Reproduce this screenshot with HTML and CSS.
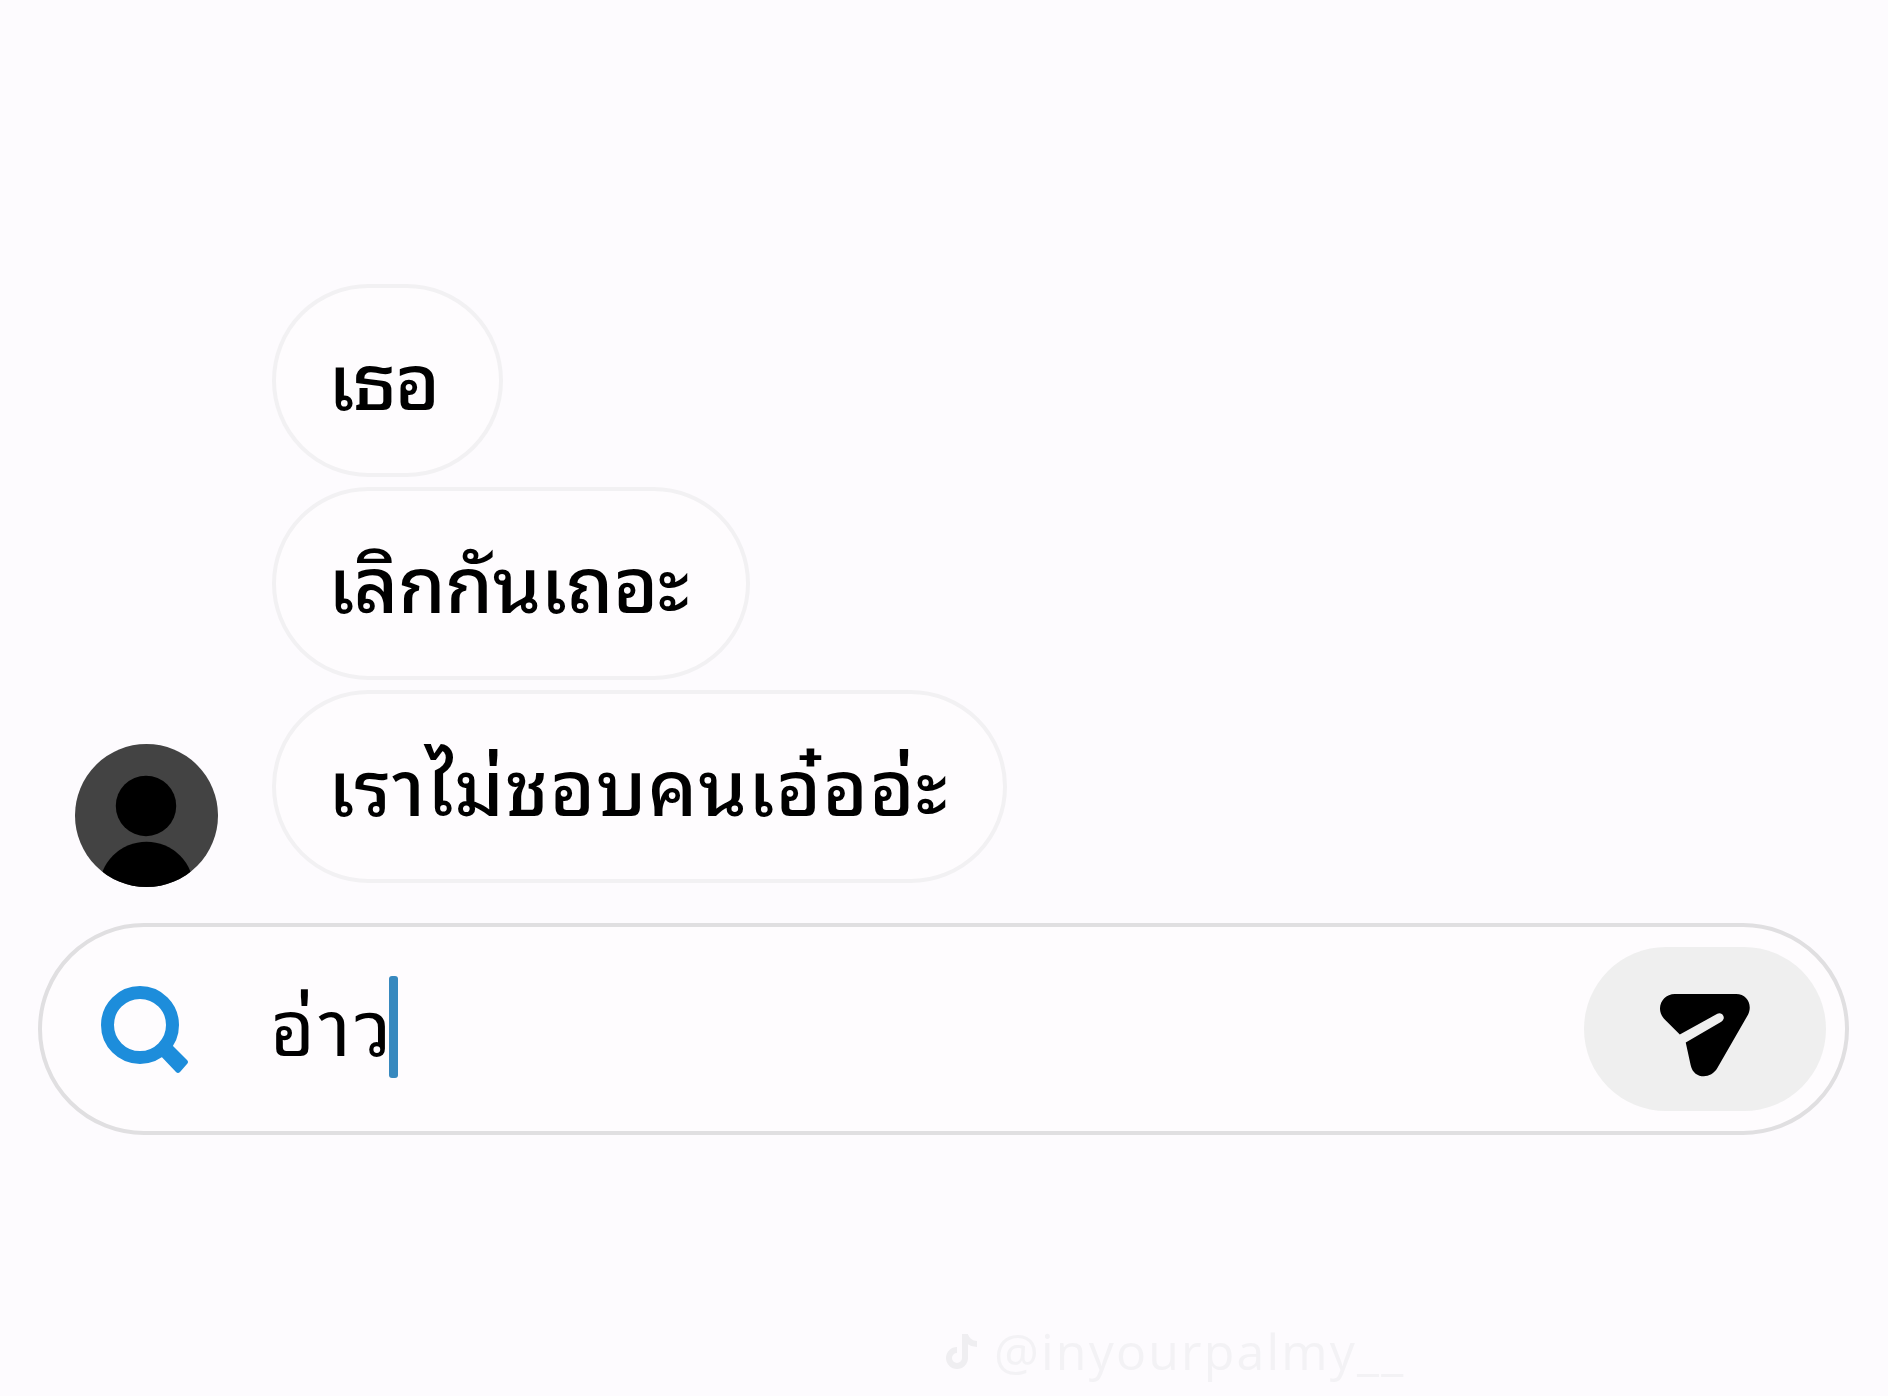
FILE: index.html
```
<!DOCTYPE html>
<html lang="th">

<head>
  <meta charset="utf-8">
  <title>แชท</title>
  <link rel="stylesheet" href="styles.css">
</head>

<body>
  <div class="chat">
    <svg class="avatar" viewBox="0 0 142 142">
      <clipPath id="round"><circle cx="71" cy="71" r="71"/></clipPath>
      <g clip-path="url(#round)">
        <rect width="142" height="142" fill="#434343"/>
        <circle cx="70.5" cy="61.5" r="30"/>
        <circle cx="71" cy="144" r="47"/>
      </g>
    </svg>
    <div class="messages">
      <div class="bubble first"><span>เธอ</span></div>
      <div class="bubble second"><span>เลิกกันเถอะ</span></div>
      <div class="bubble third"><span>เราไม่ชอบคนเอ๋ออ่ะ</span></div>
    </div>
  </div>

  <div class="inputBar">
    <svg class="search" viewBox="0 0 90 90">
      <circle cx="39" cy="41" r="32.5"/>
      <path class="handle" d="M56 68L67 57L86 76Q88 78 86 80L79 88Q77 90 75 88Z"/>
    </svg>
    <span class="typed">อ่าว</span>
    <span class="caret"></span>
    <div class="send">
      <svg viewBox="0 0 92 84">
        <path d="M15 0H77C88 0 94 11 89 21L58 75C51 87 34 86 31 72L26 49L62 28A4 4 0 0 0 58 20L20 41L4 25C-5 15 2 0 15 0Z"/>
      </svg>
    </div>
  </div>

  <div class="watermark">
    <svg viewBox="0 0 34 40">
      <path d="M19 3V27A8 8 0 1 1 11 19M19 4C21 10 25 13 31 13"/>
    </svg>
    <span>@inyourpalmy__</span>
  </div>
</body>

</html>
```

FILE: styles.css
```
* {
  box-sizing: border-box;
}

body {
  margin: 0;
  height: 1396px;
  overflow: hidden;
  background: #fdfbfe;
  color: #000;
  font-family: "Noto Sans Thai Looped", Loma, "Noto Sans Thai", "Noto Sans", sans-serif;
  font-weight: 500;
}

.chat {
  display: flex;
  align-items: flex-end;
  padding: 284px 0 0 75px;
}

.avatar {
  width: 143px;
  height: 143px;
  margin: 0 54px -4px 0;
}

.messages {
  display: flex;
  flex-direction: column;
  align-items: flex-start;
  gap: 10px;
}

.bubble {
  height: 193px;
  padding-left: 52px;
  border: 4px solid #f2f1f3;
  border-radius: 97px;
  background: #fefcfe;
  font-size: 77px;
  line-height: 175px;
  white-space: nowrap;
}

.first {
  width: 231px;
  letter-spacing: -2px;
}

.second {
  width: 478px;
  letter-spacing: -.8px;
}

.third {
  width: 735px;
  letter-spacing: 1px;
}

.inputBar {
  display: flex;
  align-items: center;
  width: 1811px;
  height: 212px;
  margin: 40px 0 0 38px;
  padding: 0 19px 0 59px;
  border: 4px solid #e0dfe1;
  border-radius: 106px;
  background: #fefcfe;
}

.search {
  width: 90px;
  height: 90px;
  fill: none;
  stroke: #1d8ddb;
  stroke-width: 13;
}

.handle {
  fill: #1d8ddb;
  stroke: none;
}

.typed {
  width: 119px;
  margin-left: 79px;
  padding-bottom: 14px;
  font-size: 77px;
  font-weight: 400;
  letter-spacing: 4.5px;
  line-height: 190px;
  white-space: nowrap;
}

.caret {
  width: 9px;
  height: 102px;
  margin-top: -4px;
  border-radius: 3px;
  background: #3789bf;
}

.send {
  display: flex;
  align-items: center;
  justify-content: center;
  width: 242px;
  height: 164px;
  margin-left: auto;
  border-radius: 82px;
  background: #efefef;
}

.send svg {
  width: 91px;
  height: 83px;
  margin: 12px 0 0 1px;
}

.watermark {
  display: flex;
  align-items: center;
  gap: 14px;
  margin: 188px 0 0 946px;
  color: #f3f2f5;
  font: 50px/56px "Open Sans", sans-serif;
  letter-spacing: 2.2px;
}

.watermark svg {
  width: 34px;
  height: 40px;
  fill: none;
  stroke: #efeef1;
  stroke-width: 6;
}
```
